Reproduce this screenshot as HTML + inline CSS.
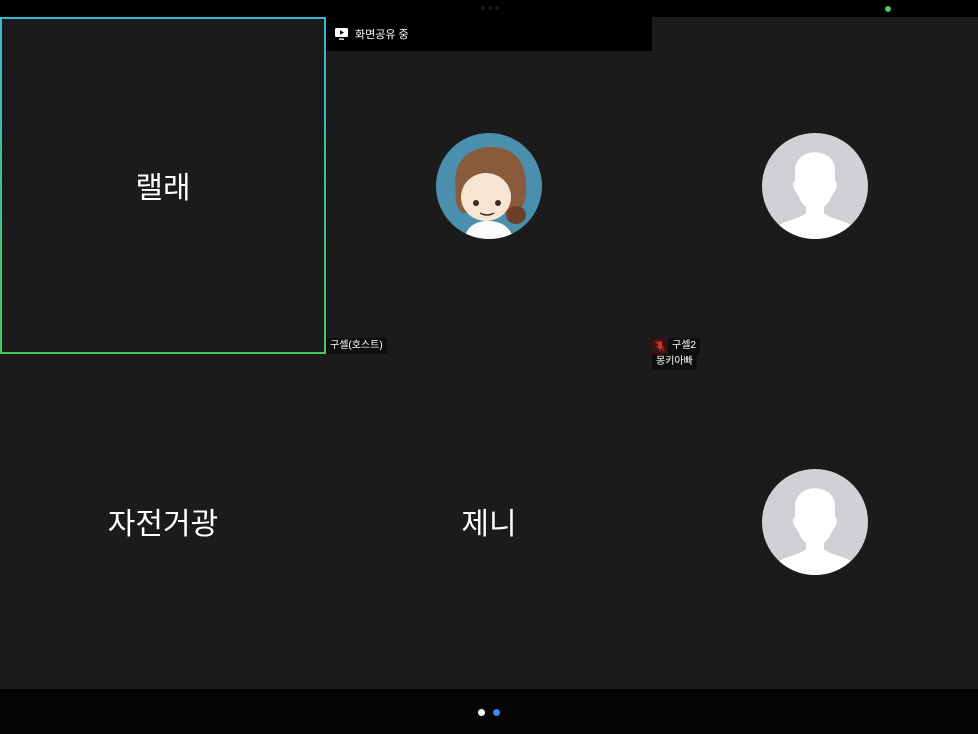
<!DOCTYPE html>
<html><head><meta charset="utf-8"><style>
*{margin:0;padding:0;box-sizing:border-box}
body{width:978px;height:734px;background:#000;position:relative;overflow:hidden;font-family:"Liberation Sans","Noto Sans CJK KR",sans-serif;color:#fff}
.t{position:absolute;background:#1b1b1b}
.name{position:absolute;width:326px;text-align:center;font-size:30px;color:#fff}
.lbl{position:absolute;background:#0e0e0e;font-size:10px;color:#fff;padding:1px 4px;height:16px;line-height:14px}
.av{position:absolute;width:106px;height:106px;border-radius:50%;overflow:hidden}
</style></head><body>
<div style="position:absolute;left:481px;top:6px;width:18px;height:4px;display:flex;gap:3px"><i style="width:4px;height:4px;border-radius:50%;background:#1a1a1a"></i><i style="width:4px;height:4px;border-radius:50%;background:#1a1a1a"></i><i style="width:4px;height:4px;border-radius:50%;background:#1a1a1a"></i></div>
<div style="position:absolute;left:885px;top:6px;width:6px;height:6px;border-radius:50%;background:#4cc763"></div>

<div class="t" style="left:0;top:17px;width:326px;height:337px;border:2px solid;border-image:linear-gradient(#35b8d0,#47c95a) 1"></div>
<div class="t" style="left:326px;top:17px;width:326px;height:337px"></div>
<div class="t" style="left:652px;top:17px;width:326px;height:337px"></div>
<div class="t" style="left:0;top:354px;width:326px;height:335px"></div>
<div class="t" style="left:326px;top:354px;width:326px;height:335px"></div>
<div class="t" style="left:652px;top:354px;width:326px;height:335px"></div>

<div style="position:absolute;left:326px;top:17px;width:326px;height:34px;background:#000"></div>
<svg style="position:absolute;left:335px;top:28px" width="13" height="13" viewBox="0 0 13 13"><rect x="0" y="0" width="13" height="9" rx="1.5" fill="#fff"/><path d="M5 2.3 L9 4.5 L5 6.7Z" fill="#000"/><rect x="4" y="10.5" width="5" height="1.3" fill="#fff"/></svg>
<div style="position:absolute;left:355px;top:26px;font-size:11px">화면공유 중</div>

<div class="name" style="left:0;top:163px">랠래</div>
<div class="name" style="left:0;top:499px">자전거광</div>
<div class="name" style="left:326px;top:499px">제니</div>

<div class="av" style="left:436px;top:133px;background:#4a8fae">
<svg width="106" height="106" viewBox="0 0 106 106">
<path d="M20 60 Q14 20 50 14 Q88 12 90 50 Q92 72 80 80 L26 80 Q18 72 20 60Z" fill="#8a5a3c"/>
<ellipse cx="50" cy="64" rx="25" ry="24" fill="#f8e4d2"/>
<path d="M25 55 Q30 25 60 24 Q84 30 80 58 Q70 38 50 36 Q34 40 25 55Z" fill="#8a5a3c"/>
<ellipse cx="80" cy="82" rx="10" ry="9" fill="#6b3f28"/>
<circle cx="40" cy="70" r="3" fill="#3a2a20"/><circle cx="62" cy="70" r="3" fill="#3a2a20"/>
<path d="M44 80 Q51 84 58 80" stroke="#3a2a20" stroke-width="1.5" fill="none"/>
<path d="M28 106 Q32 88 52 88 Q72 88 78 106Z" fill="#fbfbfb"/>
</svg></div>

<div class="av" style="left:762px;top:133px;background:#cfd1d4">
<svg width="106" height="106" viewBox="0 0 106 106"><path d="M42 22 Q53 16 66 23 Q73 28 73 38 L73 48 Q76 50 74 56 Q71 61 70 62 Q67 70 62 74 L62 80 Q66 84 80 88 Q92 92 98 100 L98 106 L8 106 L8 100 Q14 92 26 88 Q40 84 44 80 L44 74 Q39 70 36 62 Q35 61 32 56 Q30 50 33 48 L33 38 Q33 27 42 22Z" fill="#fff"/></svg></div>
<div class="av" style="left:762px;top:469px;background:#cfd1d4">
<svg width="106" height="106" viewBox="0 0 106 106"><path d="M42 22 Q53 16 66 23 Q73 28 73 38 L73 48 Q76 50 74 56 Q71 61 70 62 Q67 70 62 74 L62 80 Q66 84 80 88 Q92 92 98 100 L98 106 L8 106 L8 100 Q14 92 26 88 Q40 84 44 80 L44 74 Q39 70 36 62 Q35 61 32 56 Q30 50 33 48 L33 38 Q33 27 42 22Z" fill="#fff"/></svg></div>

<div class="lbl" style="left:326px;top:338px">구셀(호스트)</div>
<div style="position:absolute;left:652px;top:338px;width:16px;height:16px;background:#3a1010"><svg width="16" height="16" viewBox="0 0 16 16"><rect x="6" y="3" width="4" height="7" rx="2" fill="#d0302a"/><path d="M4.5 8 Q8 13 11.5 8 M8 11 V13.5" stroke="#d0302a" fill="none"/><path d="M3.5 3 L12.5 13" stroke="#d0302a" stroke-width="1.2"/></svg></div>
<div class="lbl" style="left:668px;top:338px">구셀2</div>
<div class="lbl" style="left:652px;top:354px">몽키아빠</div>

<div style="position:absolute;left:0;top:689px;width:978px;height:45px;background:#050505"></div>
<div style="position:absolute;left:478px;top:709px;width:7px;height:7px;border-radius:50%;background:#fff"></div>
<div style="position:absolute;left:493px;top:709px;width:7px;height:7px;border-radius:50%;background:#2f8df5"></div>
</body></html>
